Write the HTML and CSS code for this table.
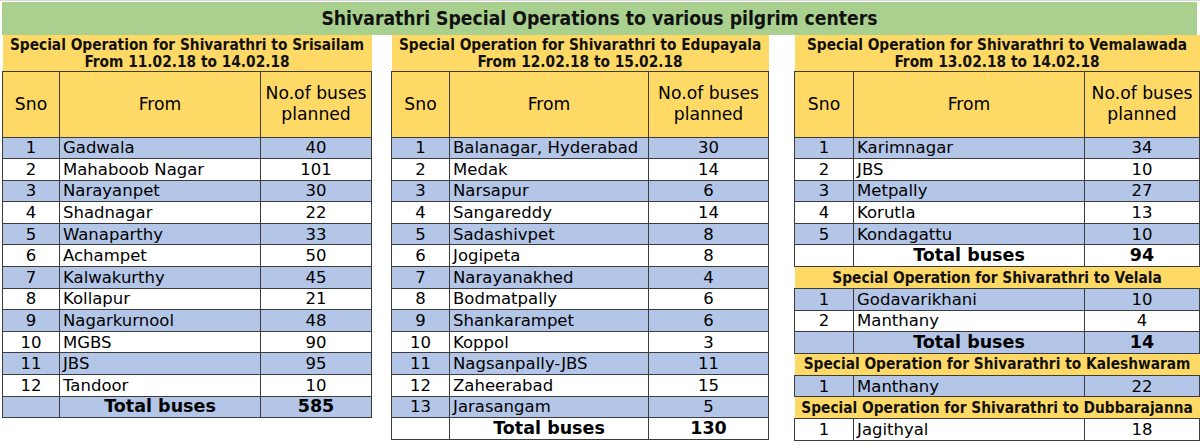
FILE: index.html
```html
<!DOCTYPE html>
<html>
<head>
<meta charset="utf-8">
<link rel="stylesheet" href="styles.css">
</head>
<body>
<div class="sheet">
  <div class="banner">Shivarathri Special Operations to various pilgrim centers</div>
  <div class="tables">
    <table class="t t1">
      <colgroup><col class="c1a"><col class="c1b"><col class="c1c"></colgroup>
      <tr class="title2"><td colspan="3">Special Operation for Shivarathri to Srisailam<br>From 11.02.18 to 14.02.18</td></tr>
      <tr class="head"><td>Sno</td><td>From</td><td>No.of buses<br>planned</td></tr>
      <tr class="b"><td>1</td><td class="n">Gadwala</td><td>40</td></tr>
      <tr><td>2</td><td class="n">Mahaboob Nagar</td><td>101</td></tr>
      <tr class="b"><td>3</td><td class="n">Narayanpet</td><td>30</td></tr>
      <tr><td>4</td><td class="n">Shadnagar</td><td>22</td></tr>
      <tr class="b"><td>5</td><td class="n">Wanaparthy</td><td>33</td></tr>
      <tr><td>6</td><td class="n">Achampet</td><td>50</td></tr>
      <tr class="b"><td>7</td><td class="n">Kalwakurthy</td><td>45</td></tr>
      <tr><td>8</td><td class="n">Kollapur</td><td>21</td></tr>
      <tr class="b"><td>9</td><td class="n">Nagarkurnool</td><td>48</td></tr>
      <tr><td>10</td><td class="n">MGBS</td><td>90</td></tr>
      <tr class="b"><td>11</td><td class="n">JBS</td><td>95</td></tr>
      <tr><td>12</td><td class="n">Tandoor</td><td>10</td></tr>
      <tr class="b total"><td></td><td>Total buses</td><td>585</td></tr>
    </table>
    <table class="t t2">
      <colgroup><col class="c2a"><col class="c2b"><col class="c2c"></colgroup>
      <tr class="title2"><td colspan="3">Special Operation for Shivarathri to Edupayala<br>From 12.02.18 to 15.02.18</td></tr>
      <tr class="head"><td>Sno</td><td>From</td><td>No.of buses<br>planned</td></tr>
      <tr class="b"><td>1</td><td class="n">Balanagar, Hyderabad</td><td>30</td></tr>
      <tr><td>2</td><td class="n">Medak</td><td>14</td></tr>
      <tr class="b"><td>3</td><td class="n">Narsapur</td><td>6</td></tr>
      <tr><td>4</td><td class="n">Sangareddy</td><td>14</td></tr>
      <tr class="b"><td>5</td><td class="n">Sadashivpet</td><td>8</td></tr>
      <tr><td>6</td><td class="n">Jogipeta</td><td>8</td></tr>
      <tr class="b"><td>7</td><td class="n">Narayanakhed</td><td>4</td></tr>
      <tr><td>8</td><td class="n">Bodmatpally</td><td>6</td></tr>
      <tr class="b"><td>9</td><td class="n">Shankarampet</td><td>6</td></tr>
      <tr><td>10</td><td class="n">Koppol</td><td>3</td></tr>
      <tr class="b"><td>11</td><td class="n">Nagsanpally-JBS</td><td>11</td></tr>
      <tr><td>12</td><td class="n">Zaheerabad</td><td>15</td></tr>
      <tr class="b"><td>13</td><td class="n">Jarasangam</td><td>5</td></tr>
      <tr class="total"><td></td><td>Total buses</td><td>130</td></tr>
    </table>
    <table class="t t3">
      <colgroup><col class="c3a"><col class="c3b"><col class="c3c"></colgroup>
      <tr class="title2"><td colspan="3">Special Operation for Shivarathri to Vemalawada<br>From 13.02.18 to 14.02.18</td></tr>
      <tr class="head"><td>Sno</td><td>From</td><td>No.of buses<br>planned</td></tr>
      <tr class="b"><td>1</td><td class="n">Karimnagar</td><td>34</td></tr>
      <tr><td>2</td><td class="n">JBS</td><td>10</td></tr>
      <tr class="b"><td>3</td><td class="n">Metpally</td><td>27</td></tr>
      <tr><td>4</td><td class="n">Korutla</td><td>13</td></tr>
      <tr class="b"><td>5</td><td class="n">Kondagattu</td><td>10</td></tr>
      <tr class="total"><td></td><td>Total buses</td><td>94</td></tr>
      <tr class="title1"><td colspan="3">Special Operation for Shivarathri to Velala</td></tr>
      <tr class="b"><td>1</td><td class="n">Godavarikhani</td><td>10</td></tr>
      <tr><td>2</td><td class="n">Manthany</td><td>4</td></tr>
      <tr class="b total"><td></td><td>Total buses</td><td>14</td></tr>
      <tr class="title1"><td colspan="3">Special Operation for Shivarathri to Kaleshwaram</td></tr>
      <tr class="b"><td>1</td><td class="n">Manthany</td><td>22</td></tr>
      <tr class="title1"><td colspan="3">Special Operation for Shivarathri to Dubbarajanna</td></tr>
      <tr><td>1</td><td class="n">Jagithyal</td><td>18</td></tr>
    </table>
  </div>
</div>
</body>
</html>
```
FILE: styles.css
```css
html, body {
  margin: 0;
  padding: 0;
  background: #ffffff;
}
.sheet {
  width: 1200px;
  height: 445px;
  overflow: hidden;
  padding: 2px 0 0 2px;
  box-sizing: border-box;
  border-top: 1px solid #d9d9d9;
  font-family: "DejaVu Sans", Verdana, sans-serif;
  color: #000;
}
.banner {
  width: 1195px;
  height: 33px;
  margin-top: -1px;
  background: #a9d08e;
  text-align: center;
  font-family: "DejaVu Sans Condensed", "DejaVu Sans", sans-serif;
  font-weight: bold;
  font-size: 19.2px;
  line-height: 33px;
  color: #111;
}
.tables {
  display: flex;
  align-items: flex-start;
}
.t {
  border-collapse: collapse;
  table-layout: fixed;
  font-size: 16.5px;
}
.t1 { width: 369px; }
.t2 { width: 377px; margin-left: 19px; }
.t3 { width: 405px; margin-left: 25px; }
.c1a { width: 57px; } .c1b { width: 201px; } .c1c { width: 111px; }
.c2a { width: 58px; } .c2b { width: 199px; } .c2c { width: 120px; }
.c3a { width: 59px; } .c3b { width: 231px; } .c3c { width: 115px; }
.t td {
  border: 1px solid #3c3c3c;
  padding: 0;
  text-align: center;
  white-space: nowrap;
  overflow: hidden;
  line-height: 19px;
}
.t td.n {
  text-align: left;
  padding-left: 3px;
}
.t tr { height: 21.6px; }
.t tr.b td { background: #b4c6e7; }
.t tr.title2 { height: 36px; }
.t tr.title2 td,
.t tr.title1 td {
  background: #ffd966;
  border-left: none;
  border-right: none;
  border-top: none;
  font-family: "DejaVu Sans Condensed", "DejaVu Sans", sans-serif;
  font-weight: bold;
  font-size: 15.3px;
  line-height: 17px;
  padding-top: 1px;
  color: #111;
}
.t tr.title2 td { padding-top: 2px; line-height: 16.5px; }
.t tr.title1 { height: 22px; }
.t tr.head { height: 66px; }
.t tr.head td {
  background: #ffd966;
  font-size: 17.2px;
  line-height: 21px;
}
.t tr.total td {
  font-weight: bold;
  font-size: 17.5px;
}
```
